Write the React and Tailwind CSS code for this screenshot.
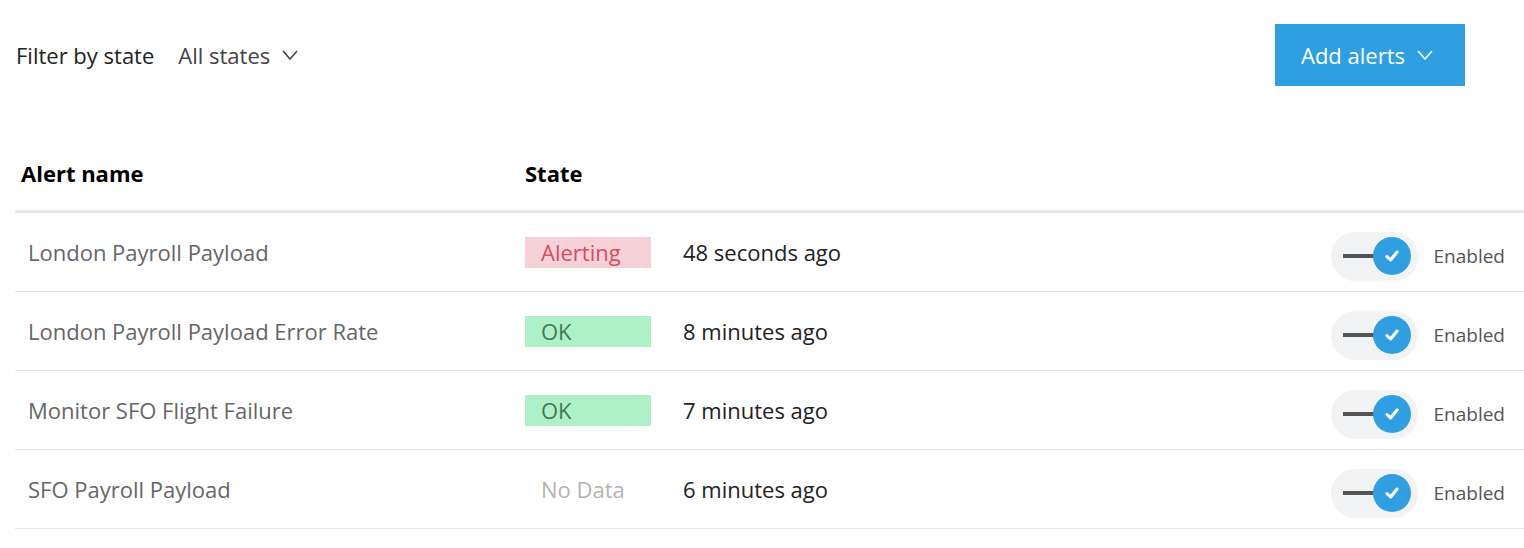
import React from "react";

const ROWS = [
  { name: "London Payroll Payload", state: "alerting", time: "48 seconds ago" },
  { name: "London Payroll Payload Error Rate", state: "ok", time: "8 minutes ago" },
  { name: "Monitor SFO Flight Failure", state: "ok", time: "7 minutes ago" },
  { name: "SFO Payroll Payload", state: "nodata", time: "6 minutes ago" },
];

function Chevron({ className }) {
  return (
    <svg viewBox="0 0 16 10" className={className} fill="none" stroke="currentColor" strokeWidth="1.6">
      <polyline points="1,1 8,9 15,1" />
    </svg>
  );
}

function StateBadge({ state }) {
  if (state === "alerting") {
    return (
      <div className="w-[126px] h-[31px] flex items-center pl-[16px] bg-[#f6d2d8] text-[#d84b66]">
        Alerting
      </div>
    );
  }
  if (state === "ok") {
    return (
      <div className="w-[126px] h-[31px] flex items-center pl-[16px] bg-[#aef1c9] text-[#3d7a55]">
        OK
      </div>
    );
  }
  return (
    <div className="w-[126px] h-[31px] flex items-center pl-[16px] text-[#b3b3b3]">No Data</div>
  );
}

function Toggle() {
  return (
    <div className="w-[87px] h-[49px] mt-[8px] rounded-full bg-[#f1f3f5] flex items-center pl-[12px]">
      <div className="w-[32px] h-[4px] bg-[#555]" />
      <div className="w-[38px] h-[38px] -ml-[2px] rounded-full bg-[#2f9fe2] flex items-center justify-center">
        <svg viewBox="0 0 16 16" className="w-[18px] h-[18px]" fill="none" stroke="white" strokeWidth="2.8" strokeLinecap="round" strokeLinejoin="round">
          <polyline points="3.5,8.5 6.8,11.5 12.5,4.5" />
        </svg>
      </div>
    </div>
  );
}

export default function App() {
  return (
    <div className="w-[1524px] h-[548px] bg-white pl-[15px] overflow-hidden" style={{ fontFamily: '"Open Sans", sans-serif' }}>
      {/* Top bar */}
      <div className="flex items-center justify-between pt-[24px] pr-[59px]">
        <div className="flex items-center text-[22px]">
          <span className="text-[#222] ml-[1px]">Filter by state</span>
          <span className="text-[#444] ml-[24px]">All states</span>
          <Chevron className="w-[16px] h-[10px] ml-[12px] text-[#444]" />
        </div>
        <button className="w-[190px] h-[62px] bg-[#2e9fe1] text-white text-[22px] flex items-center justify-center gap-[12px] pr-[6px]">
          Add alerts
          <Chevron className="w-[16px] h-[10px] text-white" />
        </button>
      </div>

      {/* Header */}
      <div className="flex items-end h-[127px] pb-[20px] border-b-[3px] border-[#e8e8e8] text-[22px] font-bold text-black">
        <div className="w-[510px] pl-[6px]">Alert name</div>
        <div>State</div>
      </div>

      {/* Rows */}
      {ROWS.map((r) => (
        <div key={r.name} className="flex items-center h-[79px] border-b border-[#e6e6e6] text-[22px]">
          <div className="w-[510px] pl-[13px] text-[#666]">{r.name}</div>
          <StateBadge state={r.state} />
          <div className="ml-[32px] text-[#222]">{r.time}</div>
          <div className="flex-1" />
          <Toggle />
          <div className="ml-[16px] mr-[19px] mt-[8px] text-[19px] text-[#555]">Enabled</div>
        </div>
      ))}
    </div>
  );
}
